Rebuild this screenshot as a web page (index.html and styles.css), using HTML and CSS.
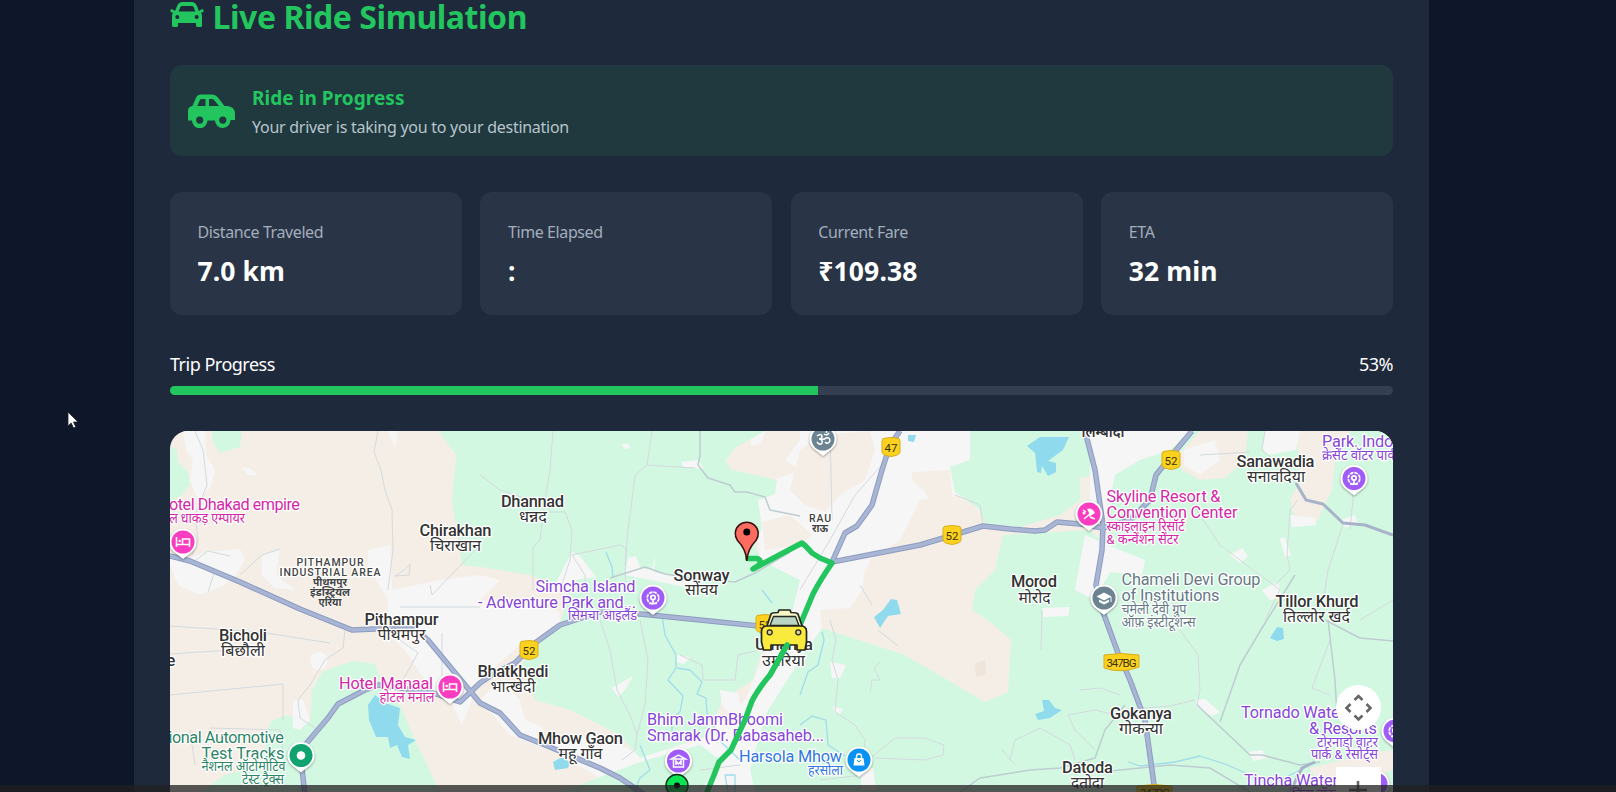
FILE: index.html
```html
<!DOCTYPE html>
<html lang="en">
<head>
<meta charset="utf-8">
<title>Live Ride Simulation</title>
<link rel="stylesheet" href="styles.css">
</head>
<body>
<main class="panel">
  <h1 class="title">
    <svg class="title-icon" viewBox="0 0 34 26"><path fill="currentColor" fill-rule="evenodd" d="M5 9 7.300 3.500Q8.600 0 12.500 0H21.500Q25.400 0 26.700 3.500L29 9 31.500 7.300 33.600 7.600 33.400 10 31 10.800Q32 12 32 14V23.500Q32 25 30.500 25H27.500Q26 25 26 23.500V21H8V23.500Q8 25 6.500 25H3.500Q2 25 2 23.500V14Q2 12 3 10.800L.6 10 .4 7.600 2.500 7.300ZM8.700 9.500H25.300L23.700 5.300Q23.200 4 21.800 4H12.200Q10.800 4 10.300 5.300ZM7.300 12.900A2 2 0 1 0 7.300 16.900 2 2 0 1 0 7.300 12.900ZM26.700 12.900A2 2 0 1 0 26.700 16.900 2 2 0 1 0 26.700 12.900Z"/></svg>
    <span class="title-text">Live Ride Simulation</span>
  </h1>

  <section class="status">
    <svg class="status-icon" viewBox="0 0 47 34"><path fill="currentColor" fill-rule="evenodd" d="M4.500 12 8 3.800Q9.500 .5 13 .5H24.500Q27.500 .5 29.500 3L36.500 12H39Q47 12.500 47 20V26H42.500A7.700 7.700 0 0 1 27 26.500H19.500A7.700 7.700 0 0 1 4 26.500H0V17Q0 12.500 4.500 12ZM9.300 12H17.500V5H13.500Q12.300 5 11.800 6.200ZM21 12H31L26.300 6.200Q25.400 5 24 5H21ZM11.700 22.500A3.600 3.600 0 1 0 11.700 29.700 3.600 3.600 0 1 0 11.700 22.500ZM34.800 22.500A3.600 3.600 0 1 0 34.800 29.700 3.600 3.600 0 1 0 34.800 22.500Z"/></svg>
    <div class="status-copy">
      <h2 class="status-title">Ride in Progress</h2>
      <p class="status-text">Your driver is taking you to your destination</p>
    </div>
  </section>

  <section class="stats">
    <div class="stat"><div class="stat-label">Distance Traveled</div><div class="stat-value">7.0 km</div></div>
    <div class="stat"><div class="stat-label">Time Elapsed</div><div class="stat-value">:</div></div>
    <div class="stat"><div class="stat-label">Current Fare</div><div class="stat-value">₹109.38</div></div>
    <div class="stat"><div class="stat-label">ETA</div><div class="stat-value">32 min</div></div>
  </section>

  <section class="progress">
    <div class="progress-head"><span>Trip Progress</span><span>53%</span></div>
    <div class="track"><div class="fill" style="width:53%"></div></div>
  </section>

  <div class="map">
  <svg class="map-svg" viewBox="170 431 1223 361">
    <defs>
      <path id="pin" d="M0-13.500A13.500 13.500 0 0 1 9.500 9.500L0 17 -9.500 9.500A13.500 13.500 0 0 1 0-13.500Z"/>
      <g id="bed" fill="none" stroke="#fff" stroke-width="1.600"><path d="M-6.500-5V5M-6.500 2.500H6.500V5M6.500 2V-3H-.5V2"/><circle cx="-3.300" cy="-1" r="1.200" fill="#fff" stroke="none"/></g>
      <g id="flower" fill="none" stroke="#fff" stroke-width="1.700"><circle r="5.800" stroke-dasharray="3.600 .9"/><circle cy="-.5" r="2.200"/><path d="M0 1V6M-4 5.500H4"/></g>
      <path id="shield" d="M-8-8.500Q0-10.500 8-8.500L9-6V5Q9 8 0 9.500-9 8-9 5V-6Z" fill="#fcd21f" stroke="#d9ac1c"/>
    </defs>

    <rect class="beige" x="170" y="431" width="1223" height="361"/>

    <!-- built-up land -->
    <g class="urban">
      <path d="M183 431H205L206 455 215 470 210 488 198 500 190 480 193 460 186 450Z"/>
      <path d="M241 467 250 468 258 476 248 475Z"/>
      <path d="M190 558 205 552 240 549 245 560 236 575 225 585 200 595 178 585 170 565V556Z"/>
      <path d="M262 555 280 549 276 575 295 590 275 588 262 575Z"/>
      <path d="M368 550 390 545 392 590 440 580 480 575 500 580 480 600 540 605 560 612 560 630 520 645 480 680 462 725 450 700 400 690 425 680 405 650 395 640 388 615 388 600 368 565Z"/>
      <path d="M388 431H398L395 447Z"/>
      <path d="M750 431H970V500L1000 530 970 520 950 495 920 500 900 540 870 560 862 590 850 625 820 640 790 700 760 792H640L620 760 700 740 745 700 770 640 760 560Z"/>
      <path d="M480 700 500 680 520 700 525 720 542 727 545 740 600 735 640 755 640 792 600 778 560 755 510 735Z"/>
    </g>

    <!-- farmland patches over built-up land -->
    <g class="beige">
      <path d="M766 431H800V440L785 460 800 470 770 482 730 472 725 462 735 450 760 444Z"/>
      <path d="M800 450 820 435 870 431 875 450 865 480 840 495 825 512 805 505 790 490 795 470Z"/>
      <path d="M912 472 950 470 953 500 935 512 925 492 912 480Z"/>
      <path d="M762 522 790 515 812 535 800 545 765 550Z"/>
      <path d="M865 570 900 550 935 545 935 515 955 496 983 508 1003 545 995 570 975 590 972 610 1000 625 1015 660 1011 700 985 702 905 655 822 628 820 610 850 608 862 590Z"/>
    </g>

    <!-- vegetation -->
    <g class="green">
      <path d="M170 446 177 450 178 462 188 472 190 485 182 495 170 502Z"/>
      <path d="M212 431H242L240 447 220 453 213 443Z"/>
      <path d="M438 431H765L735 448 725 461 732 470 777 480 775 494 758 500 762 528 755 545 760 560 800 580 790 620 765 640 753 680 722 700 710 735 640 758 620 735 570 710 535 700 522 665 530 645 560 625 565 605 570 590 530 575 480 567 462 565 452 500 456 455Z"/>
      <path d="M340 665 355 661 375 664 383 685 400 705 415 740 440 792H200L225 775 262 765 270 722 285 715 310 722 312 690 322 672Z"/>
      <path d="M970 431H1090L1095 475 1080 478 1080 500 1060 515 1020 527 985 524 980 510 955 492 950 467 970 460Z"/>
      <path d="M822 628 905 655 985 702 1008 692 1011 640 990 622 972 610 975 590 995 570 1003 535 1090 530 1110 550 1110 431H1393V792H755L750 770 765 715 800 660Z"/>
      <path d="M560 792 640 762 700 745 720 760 700 792Z"/>
    </g>

    <g class="beige">
      <path d="M1178 455 1200 431H1248L1245 460 1225 478 1200 480 1182 470Z"/>
      <path d="M1296 431H1350L1335 460 1332 490 1325 505 1315 525 1295 520 1290 500 1300 480Z"/>
      <path d="M1310 768 1375 752 1393 750V770L1340 785 1320 785Z"/>
    </g>
    <g class="urban">
      <path d="M1090 431H1190L1170 450 1140 460 1115 475 1105 520 1090 500Z"/>
      <path d="M1184 450 1215 440 1220 460 1200 475 1184 465Z"/>
      <path d="M1265 431H1300L1296 450 1268 455 1262 448Z"/>
      <path d="M1290 515 1315 518 1316 525 1292 527Z"/>
      <path d="M1085 535 1120 550 1145 560 1142 575 1110 572 1095 600 1075 590Z"/>
      <path d="M1230 555 1242 548 1248 556 1240 563Z"/>
      <path d="M1262 590 1278 582 1282 598 1270 600Z"/>
      <path d="M1340 520 1355 515 1358 525 1345 527Z"/>
      <path d="M1196 700 1205 699 1220 712 1212 716 1197 708Z"/>
      <path d="M1248 752 1262 750 1267 758 1254 761Z"/>
      <path d="M1280 539 1284 537 1291 555 1285 557Z"/>
      <path d="M1042 608 1070 607 1068 616 1043 617Z"/>
      <path d="M830 662 846 665 840 678 832 678Z"/>
      <path d="M833 706 843 709 840 714 834 713Z"/>
      <path d="M612 688 633 676 625 690 618 697Z"/>
      <path d="M555 585 566 563 572 552 580 556 596 577 575 580 568 592Z"/>
      <path d="M625 575 628 558 636 556 640 568 652 570 655 555 654 572 700 582 690 588 650 580Z"/>
      <path d="M720 690 738 693 740 705 735 720 722 705Z"/>
      <path d="M681 462 698 460 704 469 683 467Z"/>
      <path d="M676 655 690 657 684 664 677 662Z"/>
      <path d="M622 444 628 443 630 448 624 449Z"/>
      <path d="M293 700 303 700 310 720 300 730 293 728Z"/>
      <circle cx="319" cy="661" r="9"/>
      <path d="M860 767 873 768 876 790 862 790Z"/>
    </g>
    <path d="M975 663 985 660 986 674 976 677Z" fill="#efe5da"/>

    <!-- water -->
    <g class="water">
      <path d="M1027 446 1040 437 1069 437 1063 450 1048 461 1056 463 1056 472 1048 476 1042 466 1041 473 1037 472 1035 453Z"/>
      <path d="M908 435 916 435 914 442 908 441Z"/>
      <path d="M368 705 375 695 385 703 400 708 398 725 405 737 416 740 408 745 410 759 402 757 397 745 390 748 388 737 376 737 369 720Z"/>
      <path d="M874 617 883 610 891 599 897 600 901 614 888 616 880 628Z"/>
      <path d="M1035 714 1044 711 1042 700 1049 700 1055 708 1062 710 1050 718 1038 720Z"/>
      <path d="M1270 638 1277 627 1283 628 1284 639 1277 641Z"/>
      <path d="M553 762 562 757 570 762 568 768 555 770Z"/>
    </g>
    <g class="stream">
      <path d="M606 552 612 567 613 578"/>
      <path d="M662 616 665 635 676 655 676 668 668 680 683 696 680 712 672 718 672 732"/>
      <path d="M677 668 690 670 702 682 697 694 706 698 707 713 722 743 740 760"/>
      <path d="M822 632 824 640 818 665 808 672 800 695"/>
      <path d="M800 725 812 716 826 720 828 745 845 756"/>
      <path d="M634 792 640 778 650 770 640 745"/>
      <path d="M728 792 725 775 735 775 735 792"/>
      <path d="M1128 762 1140 766 1175 762 1200 756 1225 764 1250 775 1270 785 1290 775 1305 768"/>
      <path d="M762 590 772 603"/>
    </g>

    <!-- lanes -->
    <g class="lane">
      <path d="M195 431 203 450 207 485 195 515 198 540 192 555"/>
      <path d="M378 431 374 452 381 470 385 490 392 510 393 550 388 590"/>
      <path d="M240 575 262 555 280 549M196 560 208 551 230 556M208 592 215 570"/>
      <path d="M404 570 410 564 409 575 395 576ZM400 607H480M430 585 432 595 480 545"/>
      <path d="M170 626 260 632 330 643M170 654 230 650M170 695 283 684 283 720M345 630 343 648 325 660 310 685 298 700 300 718 318 730"/>
      <path d="M400 640 418 653 400 685M442 633V690M210 728 280 730 283 750M190 730 195 765"/>
      <path d="M553 431 550 470 545 500 540 540 533 548V590M545 512H565L572 530 570 560 560 590M572 555 620 545 626 548 625 590"/>
      <path d="M652 431 647 465 635 475 632 500 628 530 625 565M647 465 695 468"/>
      <path d="M480 475 500 490 530 500M572 555 585 575 585 590"/>
      <path d="M600 620 610 650 617 690 630 715 637 735 635 750 622 760M640 620 648 660 645 705 637 735"/>
      <path d="M680 655 702 665 703 680 735 680 738 655 760 650"/>
      <path d="M700 770 740 765M830 620 836 640 832 660 838 680 835 712 855 725 865 740 862 775 820 780"/>
      <path d="M878 630 898 646M870 692 872 680 880 680 874 668 880 662"/>
      <path d="M868 760 895 738 925 738 944 745 943 755 925 760 875 758"/>
      <path d="M830 431 832 520M895 450 855 495 830 540 800 590"/>
      <path d="M955 495 980 505 983 525M860 585 872 605"/>
      <path d="M1068 715 1095 710 1115 715M1068 715 1075 730 1095 750M1010 760 1015 740 1040 728 1070 745 1075 760"/>
      <path d="M1002 750 1015 765M1042 610 1041 650M1080 690 1100 688 1120 695"/>
      <path d="M1265 431 1262 450 1280 465 1298 485M1250 452 1200 455M1298 500 1290 510 1287 555 1290 570 1275 585"/>
      <path d="M1190 500 1220 545 1280 590 1265 620M1343 524 1328 570 1325 590 1320 605M1350 530 1353 500 1352 485"/>
      <path d="M1120 710 1170 706 1195 700M1180 630 1198 655 1200 690 1197 705"/>
      <path d="M1330 640 1312 688 1330 695M1393 600 1360 620"/>
    </g>
    <g class="lane lane-mid">
      <path d="M700 431V455L698 465 708 478 730 485 735 492 747 492 765 497 770 510 800 516"/>
      <path d="M610 578 645 567 665 574 690 578 735 582 755 573 790 552"/>
      <path d="M1295 575 1262 628 1240 665 1220 722"/>
      <path d="M1197 705 1250 755 1262 755 1300 765 1320 762"/>
      <path d="M1328 620 1335 680 1337 715"/>
      <path d="M960 792 980 778 1030 770 1060 768 1095 758 1105 730 1125 705"/>
      <path d="M1325 620 1360 638 1393 641"/>
      <path d="M1110 771 1170 765 1210 768 1250 792"/>
    </g>

    <!-- highways -->
    <g class="road-edge">
      <path id="r1" d="M170 556 190 561 240 582 300 609 352 630 375 629 415 629 428 640 480 703 500 713 520 735 545 745 600 768 620 778 645 795"/>
      <path id="r2" d="M305 795 301 760 305 745 328 718 338 704 365 690 378 685 400 688 430 692 460 702 480 683 492 675 515 663 535 643 560 625 600 612 640 614 700 620 770 627 790 632"/>
      <path id="r3" d="M832 562 845 533 857 526 872 505 882 470 890 445 900 431"/>
      <path id="r4" d="M832 562 920 545 960 533 983 526 1010 529 1035 531 1045 530 1057 522 1080 524 1103 528"/>
      <path id="r5" d="M1085 431 1095 470 1103 525 1102 550 1096 585 1103 612 1118 653 1130 680 1145 720 1152 770 1155 792"/>
      <path id="r6" d="M1103 528 1130 520 1150 500 1156 475 1172 455 1192 431"/>
    </g>
    <g class="road-core">
      <use href="#r1"/><use href="#r2"/><use href="#r3"/><use href="#r4"/><use href="#r5"/><use href="#r6"/>
    </g>
    <path class="road-small" d="M1296 483 1306 500 1323 504 1343 523 1365 525 1393 535M1290 792 1302 768 1315 762"/>

    <!-- road shields -->
    <g class="shield-text">
      <use href="#shield" x="891" y="447"/><text x="891" y="451.500">47</text>
      <use href="#shield" x="952" y="535"/><text x="952" y="540">52</text>
      <use href="#shield" x="1171" y="460"/><text x="1171" y="465">52</text>
      <use href="#shield" x="529" y="650"/><text x="529" y="654.500">52</text>
      <use href="#shield" x="765" y="624"/><text x="765" y="629">52</text>
      <path d="M1104 655Q1121 652 1139 655V667Q1121 674 1104 668Z" fill="#fcd21f" stroke="#d9ac1c"/><text x="1121.500" y="667" textLength="30">347BG</text>
      <path d="M1137 786Q1154 783 1172 786V798H1137Z" fill="#fcd21f" stroke="#d9ac1c"/><text x="1155" y="797" textLength="30">347BG</text>
    </g>

    <!-- place names -->
    <g class="town">
      <text x="532.500" y="507" textLength="63">Dhannad</text><text class="hi" x="533" y="522" textLength="28" lengthAdjust="spacingAndGlyphs">धन्नद</text>
      <text x="455.500" y="535.500" textLength="72">Chirakhan</text><text class="hi" x="455.500" y="550.500" textLength="51" lengthAdjust="spacingAndGlyphs">चिराखान</text>
      <text x="701.500" y="580.500" textLength="56">Sonway</text><text class="hi" x="701.500" y="595" textLength="33" lengthAdjust="spacingAndGlyphs">सोंवय</text>
      <text x="401.500" y="625" textLength="74">Pithampur</text><text class="hi" x="401.500" y="640" textLength="48" lengthAdjust="spacingAndGlyphs">पीथमपुर</text>
      <text x="243" y="641" textLength="48">Bicholi</text><text class="hi" x="243" y="656" textLength="44" lengthAdjust="spacingAndGlyphs">बिछौली</text>
      <text x="513" y="677" textLength="71">Bhatkhedi</text><text class="hi" x="513" y="692" textLength="45" lengthAdjust="spacingAndGlyphs">भात्खेदी</text>
      <text x="580.500" y="743.500" textLength="85">Mhow Gaon</text><text class="hi" x="580.500" y="759" textLength="44" lengthAdjust="spacingAndGlyphs">महू गाँव</text>
      <text x="784" y="650" textLength="58">Umariya</text><text class="hi" x="783.500" y="666" textLength="43" lengthAdjust="spacingAndGlyphs">उमरिया</text>
      <text x="1034" y="587" textLength="46">Morod</text><text class="hi" x="1034.500" y="602.500" textLength="32" lengthAdjust="spacingAndGlyphs">मोरोद</text>
      <text x="1275.500" y="466.500" textLength="78">Sanawadia</text><text class="hi" x="1276" y="482" textLength="58" lengthAdjust="spacingAndGlyphs">सनावदिया</text>
      <text x="1317" y="607" textLength="83">Tillor Khurd</text><text class="hi" x="1316.500" y="622" textLength="67" lengthAdjust="spacingAndGlyphs">तिल्लोर खर्द</text>
      <text x="1141" y="719" textLength="62">Gokanya</text><text class="hi" x="1141" y="734" textLength="44" lengthAdjust="spacingAndGlyphs">गोकन्या</text>
      <text x="1087.500" y="773" textLength="51">Datoda</text><text class="hi" x="1087.500" y="788" textLength="33" lengthAdjust="spacingAndGlyphs">दतोदा</text>
      <text x="171" y="666">e</text>
      <text class="hi heavy" x="1103" y="437" textLength="43" lengthAdjust="spacingAndGlyphs">लिम्बोदी</text>
    </g>
    <g class="area">
      <text x="330" y="565.500" textLength="67">PITHAMPUR</text><text x="330" y="575.500" textLength="101">INDUSTRIAL AREA</text>
      <text class="area-hi" x="330" y="586" textLength="34" lengthAdjust="spacingAndGlyphs">पीथमपुर</text><text class="area-hi" x="330" y="596" textLength="40" lengthAdjust="spacingAndGlyphs">इंडस्ट्रियल</text><text class="area-hi" x="330" y="606" textLength="23" lengthAdjust="spacingAndGlyphs">एरिया</text>
      <text x="820" y="522" textLength="22">RAU</text><text class="area-hi" x="820" y="532" textLength="16" lengthAdjust="spacingAndGlyphs">राऊ</text>
    </g>

    <!-- points of interest -->
    <g class="poi">
      <g class="pink">
        <text class="end" x="300" y="510" textLength="142">Hotel Dhakad empire</text><text class="end hi" x="245" y="523" textLength="92" lengthAdjust="spacingAndGlyphs">होटल धाकड़ एम्पायर</text>
        <text class="end" x="433" y="689" textLength="94">Hotel Manaal</text><text class="end hi" x="434.500" y="702" textLength="55" lengthAdjust="spacingAndGlyphs">होटल मनाल</text>
        <text x="1106.500" y="501.500" textLength="114">Skyline Resort &amp;</text><text x="1106.500" y="518" textLength="131">Convention Center</text>
        <text class="hi" x="1106.500" y="531" textLength="78" lengthAdjust="spacingAndGlyphs">स्काइलाइन रिसॉर्ट</text><text class="hi" x="1106.500" y="543.500" textLength="72" lengthAdjust="spacingAndGlyphs">&amp; कन्वेंशन सेंटर</text>
      </g>
      <g class="purple">
        <text class="end" x="635.500" y="592" textLength="100">Simcha Island</text><text class="end" x="636" y="607.500" textLength="158">- Adventure Park and...</text><text class="end hi" x="637" y="620" textLength="69" lengthAdjust="spacingAndGlyphs">सिमचा आइलैंड</text>
        <text x="647" y="725" textLength="136">Bhim JanmBhoomi</text><text x="647" y="741" textLength="177">Smarak (Dr. Babasaheb...</text>
        <text x="1322" y="447" textLength="85">Park. Indore</text><text class="hi" x="1322" y="460" textLength="78" lengthAdjust="spacingAndGlyphs">क्रेसेंट वॉटर पार्क,</text>
        <text x="1241" y="718" textLength="104">Tornado Water</text><text class="end" x="1377" y="734" textLength="68">&amp; Resorts</text><text class="end hi" x="1378" y="747" textLength="61" lengthAdjust="spacingAndGlyphs">टोरनाडो वाटर</text><text class="end hi" x="1378" y="759" textLength="67" lengthAdjust="spacingAndGlyphs">पार्क &amp; रेसोर्ट्स</text>
        <text x="1244" y="786" textLength="94">Tincha Water</text><text class="hi" x="1292" y="799" textLength="46" lengthAdjust="spacingAndGlyphs">तिंचा वॉटर</text>
      </g>
      <g class="slate">
        <text x="1121.500" y="585" textLength="139">Chameli Devi Group</text><text x="1121.500" y="600.500" textLength="98">of Institutions</text><text class="hi" x="1121.500" y="614" textLength="65" lengthAdjust="spacingAndGlyphs">चमेली देवी ग्रुप</text><text class="hi" x="1121.500" y="627" textLength="74" lengthAdjust="spacingAndGlyphs">ऑफ़ इंस्टीटूशन्स</text>
      </g>
      <g class="teal">
        <text class="end" x="284" y="743" textLength="140">National Automotive</text><text class="end" x="284.500" y="758.500" textLength="83">Test Tracks</text><text class="end hi" x="285.500" y="771" textLength="84" lengthAdjust="spacingAndGlyphs">नैशनल ऑटोमोटिव</text><text class="end hi" x="284" y="784" textLength="42" lengthAdjust="spacingAndGlyphs">टेस्ट ट्रैक्स</text>
      </g>
      <g class="blue"><text class="end" x="842" y="761.500" textLength="103">Harsola Mhow</text><text class="end hi" x="843" y="775" textLength="35" lengthAdjust="spacingAndGlyphs">हरसोला</text></g>
    </g>

    <g class="pins">
      <g transform="translate(183 542)"><use href="#pin"/><circle r="11.500" fill="#f93cc0"/><use href="#bed"/></g>
      <g transform="translate(450 687)"><use href="#pin"/><circle r="11.500" fill="#f93cc0"/><use href="#bed"/></g>
      <g transform="translate(1089 514)"><use href="#pin"/><circle r="11.500" fill="#f93cc0"/><path d="M-2-5Q3-7 6-1L0 3Q1-1-2-5Z" fill="#fff"/><path d="M2-1-5 5M-6-4-3-2M1 3 6 5" fill="none" stroke="#fff" stroke-width="1.500"/><circle cx="-5" cy="-1" r="1.500" fill="#fff"/></g>
      <g transform="translate(653 598)"><use href="#pin"/><circle r="11.500" fill="#a05cf8"/><use href="#flower"/></g>
      <g transform="translate(1354 478.500)"><use href="#pin"/><circle r="11.500" fill="#a05cf8"/><use href="#flower"/></g>
      <g transform="translate(1395 731)"><use href="#pin"/><circle r="11.500" fill="#a05cf8"/><use href="#flower"/></g>
      <g transform="translate(1376 784)"><use href="#pin"/><circle r="11.500" fill="#a05cf8"/></g>
      <g transform="translate(678.500 761)"><use href="#pin"/><circle r="11.500" fill="#a05cf8"/><path d="M-7-2 0-6 7-2ZM-5-1V6H5V-1M-2.500 4V0L0 3 2.500 0V4" fill="none" stroke="#fff" stroke-width="1.500"/></g>
      <g transform="translate(1104 598)"><use href="#pin"/><circle r="11.500" fill="#6c8391"/><path d="M-7.500-1.500 0-5.500 7.500-1.500 0 2.500ZM-5 1.500V4L0 6.500 5 4V1.500L0 4ZM6.500-1V4H7.500V-1Z" fill="#fff"/></g>
      <g transform="translate(823 439)"><use href="#pin"/><circle r="11.500" fill="#6c8391"/><path d="M-6-3Q-2-6-1-3-1 0-4 0 0 0-1 4-3 7-6 3M-2 0Q1 1 3-1 7-2 7 2 5 6 2 3M1-5Q4-3 6-6" fill="none" stroke="#fff" stroke-width="1.500"/><circle cx="3.500" cy="-7" r="1" fill="#fff"/></g>
      <g transform="translate(301 755.500)"><use href="#pin"/><circle r="11.500" fill="#10a36f"/><circle r="4.300" fill="#fff"/></g>
      <g transform="translate(859 760)"><use href="#pin"/><circle r="11.500" fill="#0a92f2"/><path d="M-4.500-2H4.500L5.500 5.500H-5.500Z" fill="#fff"/><path d="M-2.500-2V-3.500A2.500 2.500 0 0 1 2.500-3.500V-2" fill="none" stroke="#fff" stroke-width="1.300"/><path d="M-2 0Q0 3.500 2 0" fill="none" stroke="#0a92f2"/></g>
    </g>

    <!-- route, origin, destination and taxi -->
    <path class="route" d="M748 558.500H757Q762 560 759 565L753 569 802 543 Q806 546 812 553 L820 558 832 563Q819 582 813 594L800 625 787 645 770 675Q758 689 752 701L745 720 731 750 719 762 714 775 707 792"/>
    <g transform="translate(677 785.500)"><circle r="11" fill="#0be553" stroke="#0c3318" stroke-width="1.500"/><circle r="3" fill="#000"/></g>
    <path d="M746.800 561Q746 549 737.500 540.500A11.500 11.500 0 1 1 756 540.500Q747.500 549 746.800 561Z" fill="#fd6c60" stroke="#38100d" stroke-width="1.500"/><circle cx="746.800" cy="532" r="3.500"/>
    <g stroke="#25251b" stroke-width="1.700" stroke-linejoin="round">
      <path d="M763 629 767 626 771 614Q772 612.500 778 612.500L779 610H790L791 612.500Q797 612.500 798 614L802 626 806 629Z" fill="#f8f5c8"/>
      <path d="M770 625.500 773.500 616.500H795.500L799 625.500Z" fill="#b9d6c4" stroke-width="1.300"/>
      <path d="M761.500 631Q762 626 767 626H801Q806 626 806.500 631V642L805 650H797V645H771V650H763.500L761.500 642Z" fill="#fbea3e"/>
      <circle cx="769.700" cy="632.300" r="2.500" fill="#d8d29a" stroke-width="1.300"/><circle cx="798.300" cy="632.300" r="2.500" fill="#d8d29a" stroke-width="1.300"/>
    </g>
    <path class="route-over" d="M787 645 770 675"/>

    <!-- map controls -->
    <g class="controls">
      <circle cx="1358.500" cy="707.500" r="22.500" fill="#fff"/>
      <path d="M1354.500 700 1358.500 696 1362.500 700M1354.500 715.500 1358.500 719.500 1362.500 715.500M1350.500 704 1346.500 708 1350.500 712M1366.500 704 1370.500 708 1366.500 712" fill="none" stroke="#666" stroke-width="2.600"/>
      <rect x="1336" y="767" width="45" height="40" rx="1" fill="#fff"/>
      <path d="M1349 790H1367M1358 781V799" stroke="#666" stroke-width="2.600"/>
    </g>
  </svg>
  </div>
</main>
<div class="bottom-shade"></div>
<svg class="cursor" viewBox="0 0 12 18"><path d="M1 1V15L4.200 12 6.500 17 8.800 16 6.500 11H11Z" fill="#fff" stroke="#222" stroke-width=".8"/></svg>
</body>
</html>
```

FILE: styles.css
```css
* { box-sizing: border-box; }
html, body { height: 100%; overflow: hidden; }
body {
  margin: 0;
  padding: 0 187px 0 134px;
  background: #0e162a;
  color: #fff;
  font-family: "Noto Sans", "Open Sans", sans-serif;
}
.panel {
  height: 792px;
  padding: 0 36px;
  background: #1e293b;
  overflow: hidden;
}
.title {
  display: flex;
  align-items: flex-start;
  gap: 8.5px;
  height: 65px;
  margin: 0;
  padding-top: 2px;
  color: #22c55e;
  font-size: 32px;
  line-height: 32px;
  letter-spacing: -0.45px;
}
.title-text { margin-top: -1px; }
.title-icon { width: 34px; height: 26px; }
.status {
  display: flex;
  align-items: center;
  gap: 17px;
  height: 91px;
  padding: 0 18px;
  border-radius: 12px;
  background: #1f393e;
}
.status-icon { width: 47px; height: 34px; color: #22c55e; }
.status-copy { padding-top: 3px; }
.status-title {
  margin: 0;
  color: #22c55e;
  font-size: 19px;
  line-height: 28px;
  letter-spacing: 0.05px;
}
.status-text {
  margin: 1px 0 0;
  color: #b8c4cc;
  font-size: 16px;
  line-height: 28px;
  letter-spacing: -0.27px;
}
.stats {
  display: grid;
  grid-template-columns: repeat(4, 1fr);
  gap: 18.7px;
  margin-top: 36px;
}
.stat {
  height: 123px;
  padding: 28px 27.5px 0;
  border-radius: 12px;
  background: #293546;
}
.stat-label {
  color: #a3adbd;
  font-size: 16px;
  line-height: 24px;
  letter-spacing: -0.4px;
}
.stat-value {
  margin-top: 9px;
  font-size: 26.5px;
  font-weight: 700;
  line-height: 36px;
  letter-spacing: 0.1px;
}
.progress { margin-top: 35px; }
.progress-head {
  display: flex;
  justify-content: space-between;
  height: 36px;
  font-size: 18px;
  line-height: 28px;
  letter-spacing: -0.5px;
}
.track {
  height: 9px;
  overflow: hidden;
  border-radius: 5px;
  background: #343f51;
}
.fill { height: 100%; background: #22c55e; }
.map {
  height: 361px;
  margin-top: 36px;
  overflow: hidden;
  border-radius: 18px 18px 0 0;
}
.map-svg {
  display: block;
  width: 1223px;
  height: 361px;
  font-family: Roboto, "Noto Sans Devanagari", "Noto Sans", sans-serif;
}
.beige { fill: #f5eee6; }
.urban { fill: #f6f6f7; }
.green { fill: #d3f8e2; }
.water { fill: #90daee; }
.stream { fill: none; stroke: #a0dce9; stroke-width: 1.3; stroke-linejoin: round; }
.lane { fill: none; stroke: #d3dade; stroke-width: 1; stroke-linejoin: round; }
.lane-mid { stroke: #bdcdd0; stroke-width: 1.5; }
.road-edge, .road-core, .road-small { fill: none; stroke-linejoin: round; }
.road-edge { stroke: #8d9cbf; stroke-width: 5.5; }
.road-core { stroke: #a8b5d5; stroke-width: 3.5; }
.road-small { stroke: #a6b3c8; stroke-width: 3; }
.shield-text { font-size: 11.5px; text-anchor: middle; fill: #3b3410; }
.town, .area, .poi { paint-order: stroke; stroke: #fff; stroke-width: 2.5; stroke-linejoin: round; }
.town { font-size: 16.5px; font-weight: 500; text-anchor: middle; fill: #333; }
.town .hi { font-size: 16px; font-weight: 400; }
.town .heavy { font-weight: 600; }
.area { font-size: 10.5px; font-weight: 500; text-anchor: middle; fill: #444; }
.area-hi { font-size: 11px; font-weight: 700; stroke-width: 1.5; }
.poi { font-size: 16.3px; }
.poi .hi { font-size: 13.5px; }
.end { text-anchor: end; }
.pink { fill: #d527a8; }
.purple { fill: #8745d8; }
.slate { fill: #657984; }
.teal { fill: #2b8566; }
.blue { fill: #3278e0; }
.pins use[href="#pin"] { fill: #fff; filter: drop-shadow(0 1px 1px rgba(0, 0, 0, .35)); }
.route, .route-over { fill: none; stroke: #22c55e; stroke-width: 5.5; stroke-linejoin: round; stroke-linecap: round; }
.bottom-shade {
  position: absolute;
  left: 0;
  right: 0;
  top: 785px;
  height: 7px;
  background: rgba(32, 32, 32, .75);
}
.cursor { position: absolute; left: 67px; top: 411px; width: 12px; height: 18px; }
```
